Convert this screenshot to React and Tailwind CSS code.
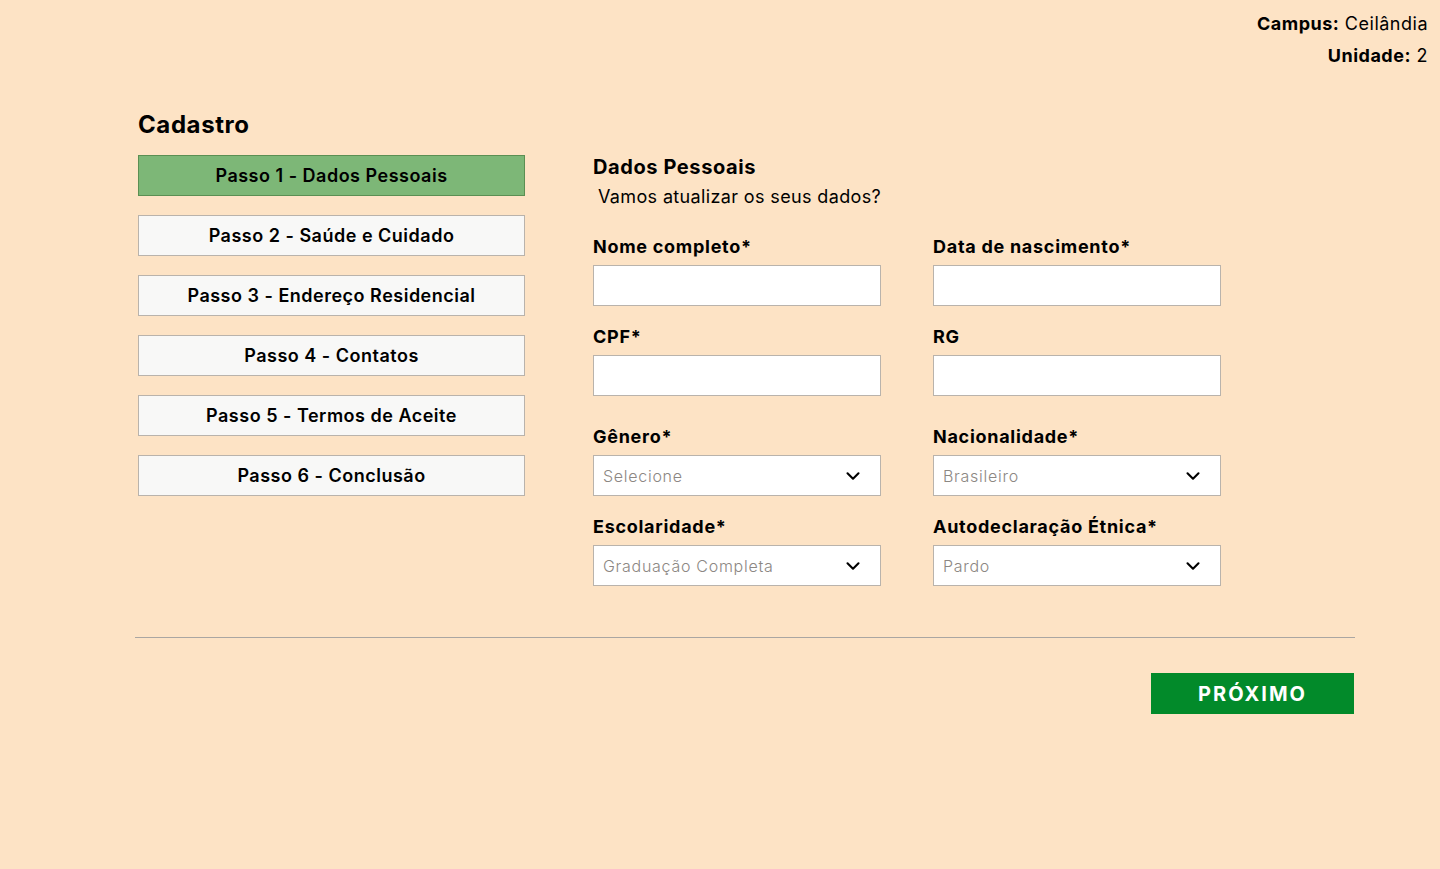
import { ChevronDown } from "lucide-react";

const steps = [
  "Passo 1 - Dados Pessoais",
  "Passo 2 - Saúde e Cuidado",
  "Passo 3 - Endereço Residencial",
  "Passo 4 - Contatos",
  "Passo 5 - Termos de Aceite",
  "Passo 6 - Conclusão",
];

function Field({ label, className = "" }) {
  return (
    <div className={className}>
      <p className="text-[18px] leading-6 font-bold tracking-[0.04em] text-black pt-px">{label}</p>
      <input className="mt-[6px] block w-[288px] h-[41px] bg-white border border-[#b9b3ac] outline-none" />
    </div>
  );
}

function SelectField({ label, value, className = "" }) {
  return (
    <div className={className}>
      <p className="text-[18px] leading-6 font-bold tracking-[0.04em] text-black pt-px">{label}</p>
      <div className="mt-[6px] flex items-center justify-between w-[288px] h-[41px] bg-white border border-[#b9b3ac] pl-[9px] pr-[16px]">
        <span className="text-[16px] text-[#8c8783] font-light tracking-[0.045em]">{value}</span>
        <ChevronDown size={22} strokeWidth={2.3} className="text-black" />
      </div>
    </div>
  );
}

export default function App() {
  return (
    <div className="min-h-[869px] bg-[#fde3c5] text-black font-['Inter',sans-serif]">
      <header className="pt-[10px] pr-[12px] flex flex-col items-end gap-[4px] text-[18px] leading-[28px] tracking-[0.028em]">
        <p>
          <span className="font-bold">Campus:</span> Ceilândia
        </p>
        <p>
          <span className="font-bold">Unidade:</span> 2
        </p>
      </header>

      <main className="px-[138px]">
        <h1 className="mt-[39px] text-[24px] leading-8 font-bold tracking-[0.025em]">Cadastro</h1>

        <div className="mt-[14px] flex items-start">
          <nav className="w-[387px] flex flex-col gap-[19px]">
            {steps.map((s, i) => (
              <button
                key={s}
                className={
                  i === 0
                    ? "h-[41px] bg-[#7db777] border border-[#5b8f53] text-[18px] font-semibold tracking-[0.028em]"
                    : "h-[41px] bg-[#f8f8f7] border border-[#b9b3ac] text-[18px] font-semibold tracking-[0.028em]"
                }
              >
                {s}
              </button>
            ))}
          </nav>

          <section className="ml-[68px]">
            <h2 className="text-[20px] leading-6 font-bold tracking-[0.03em]">Dados Pessoais</h2>
            <p className="mt-[6px] pl-[5px] text-[18px] leading-6 tracking-[0.02em]">Vamos atualizar os seus dados?</p>

            <div className="mt-[25px] grid grid-cols-[288px_288px] gap-x-[52px] gap-y-[18px]">
              <Field label="Nome completo*" />
              <Field label="Data de nascimento*" />
              <Field label="CPF*" />
              <Field label="RG" />
              <SelectField label="Gênero*" value="Selecione" className="mt-[10px]" />
              <SelectField label="Nacionalidade*" value="Brasileiro" className="mt-[10px]" />
              <SelectField label="Escolaridade*" value="Graduação Completa" />
              <SelectField label="Autodeclaração Étnica*" value="Pardo" />
            </div>
          </section>
        </div>
      </main>

      <hr className="mt-[51px] ml-[135px] mr-[85px] border-0 border-t border-[#aaa6a2]" />

      <div className="mt-[35px] mr-[86px] flex justify-end">
        <button className="w-[203px] h-[41px] bg-[#028a2a] text-white text-[20px] font-bold tracking-[0.1em]">
          PRÓXIMO
        </button>
      </div>
    </div>
  );
}
